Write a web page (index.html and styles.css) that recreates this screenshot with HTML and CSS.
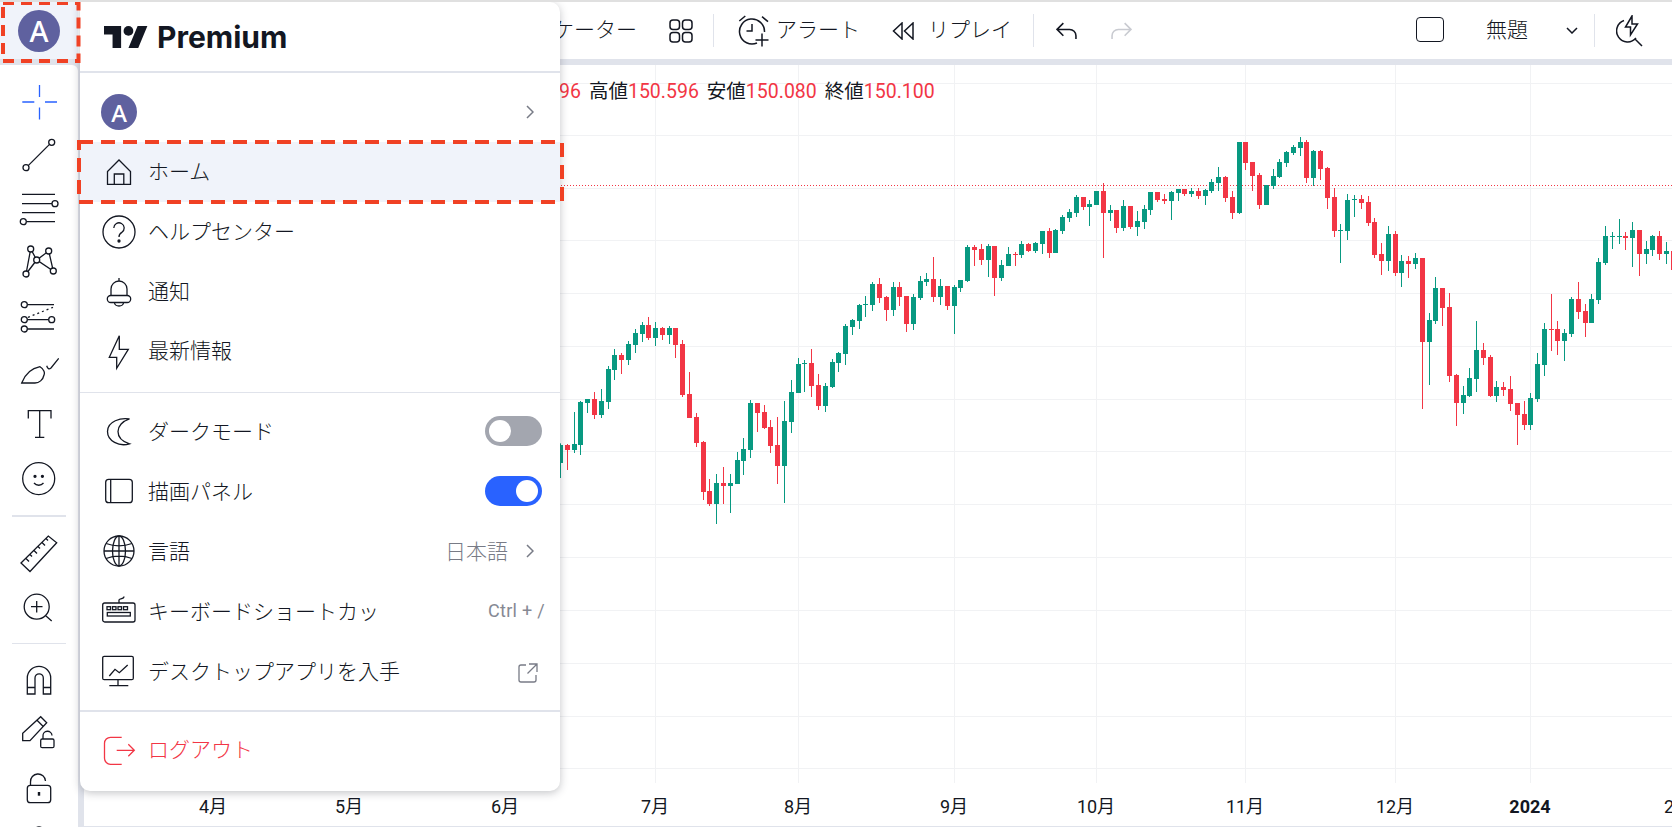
FILE: index.html
```html
<!DOCTYPE html>
<html lang="ja">
<head>
    <meta charset="UTF-8">
    <meta name="viewport" content="width=device-width, initial-scale=1.0">
    <title>チャート</title>
    <link rel="stylesheet" href="styles.css">
</head>
<body>

    <!-- top toolbar -->
    <header class="topbar">
        <div class="account-cell">
            <div class="avatar avatar-big">A</div>
        </div>
        <div class="tb-tools">
            <span class="tb-text">インジケーター</span>
            <svg class="tb-ico tb-gap" width="24" height="24" viewBox="0 0 24 24"><rect x="1" y="1" width="9.5" height="9.5" rx="3"/><rect x="13.5" y="1" width="9.5" height="9.5" rx="3"/><rect x="1" y="13.5" width="9.5" height="9.5" rx="3"/><rect x="13.5" y="13.5" width="9.5" height="9.5" rx="3"/></svg>
            <span class="tb-divider tb-divider-a"></span>
            <svg class="tb-ico tb-alert" width="36" height="36" viewBox="0 0 36 36"><path d="M3.300 8l6-5M26 3.700l6 5M28.500 19A12.500 12.500 0 1 0 21 30M16 11v7h-5.500M26 20.500v13M19.500 27h13"/></svg>
            <span class="tb-text tb-label">アラート</span>
            <svg class="tb-ico tb-gap" width="22" height="18" viewBox="0 0 22 18"><path d="M10 1L1.500 9l8.500 8zM21 1l-8.500 8 8.500 8z"/></svg>
            <span class="tb-text tb-label-wide">リプレイ</span>
            <span class="tb-divider tb-divider-b"></span>
            <svg class="tb-ico tb-undo" width="21" height="18" viewBox="0 0 20 17"><path d="M7 1L1 7l6 6M1 7h12a6 6 0 0 1 6 6v3"/></svg>
            <svg class="tb-ico tb-ico-off tb-redo" width="21" height="18" viewBox="0 0 20 17"><path d="M13 1l6 6-6 6M19 7H7a6 6 0 0 0-6 6v3"/></svg>
            <span class="tb-square"></span>
            <span class="tb-text tb-layout">無題</span>
            <svg class="tb-ico tb-chevron" width="12" height="7" viewBox="0 0 12 7"><path d="M1 1l5 5 5-5"/></svg>
            <span class="tb-divider tb-divider-right"></span>
            <svg class="tb-ico tb-bolt" width="28" height="32" viewBox="0 0 28 32"><path d="M8 5.500A11 11 0 1 0 20 23M16 1L9.500 12h5v8l7-11H16zM18.500 23.500L26 31"/></svg>
            <span class="tb-stub"></span>
        </div>
    </header>

    <div class="workspace">
        <!-- drawing tools -->
        <nav class="side">
            <div class="tool"><svg class="ico ico-blue" width="40" height="40" viewBox="0 0 40 40"><path d="M3.300 20h12M26 20h12M20.500 3v12M20.500 25.500v12"/></svg></div>
            <div class="tool"><svg class="ico" width="40" height="40" viewBox="0 0 40 40"><circle cx="7" cy="32.700" r="3"/><circle cx="32.700" cy="7.300" r="3"/><path d="M9.200 30.600L30.500 9.400"/></svg></div>
            <div class="tool"><svg class="ico" width="40" height="40" viewBox="0 0 40 40"><path d="M3 5.300h33M3 14.700h30M3 23.700h33M7.500 32.700H36"/><circle cx="36" cy="14.700" r="3"/><circle cx="4.300" cy="32.700" r="3"/></svg></div>
            <div class="tool"><svg class="ico" width="40" height="40" viewBox="0 0 40 40"><path d="M7 31L11.700 6l6 11L29.700 8l4.600 20-16.600-11L7 31"/><circle cx="7" cy="31" r="3"/><circle cx="11.700" cy="6" r="3"/><circle cx="17.700" cy="17" r="3"/><circle cx="29.700" cy="8" r="3"/><circle cx="34.300" cy="28" r="3"/></svg></div>
            <div class="tool"><svg class="ico" width="40" height="40" viewBox="0 0 40 40"><path d="M8.300 7.700H35M8.300 22.700h21.400M8.300 32H35"/><path class="dashed" d="M9 20.300l25-10"/><circle cx="5.300" cy="7.700" r="3"/><circle cx="5.300" cy="22.700" r="3"/><circle cx="32.700" cy="22.700" r="3"/><circle cx="5.300" cy="32" r="3"/></svg></div>
            <div class="tool"><svg class="ico" width="40" height="40" viewBox="0 0 40 40"><path d="M2.700 32C5 26 9 18 21 15.700c4 2.300 5 6.300 4 8.300-1 5-5 8-9 8zM27.700 14.700c1 3.300 2.300 3.800 4.300 2.300l7.700-9.700"/></svg></div>
            <div class="tool"><svg class="ico" width="40" height="40" viewBox="0 0 40 40"><path d="M9.300 14.500V6.700H32v7.800M20.700 6.700v26.600M16 33.300h9.300"/></svg></div>
            <div class="tool"><svg class="ico" width="40" height="40" viewBox="0 0 40 40"><circle cx="19.700" cy="20.600" r="16"/><circle class="dot" cx="16" cy="18.300" r="1"/><circle class="dot" cx="23.400" cy="18.300" r="1"/><path d="M15 25c2.500 3 7 3 9.500 0"/></svg></div>
            <div class="side-divider side-divider-a"></div>
            <div class="tool"><svg class="ico" width="40" height="40" viewBox="0 0 40 40"><path d="M2 29L29.300 2l8.400 6.700L11 37.500zM7 24.500l3 3M11 20.500l2 2M15 16.500l3 3M19 12.500l2 2M23 8.500l3 3M27 4.500l2 2"/></svg></div>
            <div class="tool"><svg class="ico" width="40" height="40" viewBox="0 0 40 40"><circle cx="17.700" cy="18.700" r="12.500"/><path d="M26.700 27.700l6 5.300M12 18.700h11.500M17.700 13v11.500"/></svg></div>
            <div class="side-divider side-divider-b"></div>
            <div class="tool"><svg class="ico" width="40" height="40" viewBox="0 0 40 40"><path d="M8.300 34V18a11.700 11.700 0 0 1 23.400 0v16h-7.400V18a4.150 4.150 0 0 0-8.300 0v16zM8.300 27.500H16M24.300 27.500h7.400"/></svg></div>
            <div class="tool"><svg class="ico" width="40" height="40" viewBox="0 0 40 40"><path d="M3.700 27.700v-7.400L21.700 3.700l6 6L11 27.700zM18 7.200l6 6M24 26v-3a4.500 4.500 0 0 1 9-.5"/><rect x="21.700" y="26" width="13.300" height="8.700" rx="1.500"/></svg></div>
            <div class="tool"><svg class="ico" width="40" height="40" viewBox="0 0 40 40"><rect x="8.300" y="18.300" width="23.400" height="17.400" rx="3"/><path d="M11.500 18.300V15a7.500 7.500 0 0 1 15-1"/><path class="key" d="M20 25v3.700"/></svg></div>
            <div class="tool"><svg class="ico" width="40" height="40" viewBox="0 0 40 40"><circle cx="20" cy="12" r="6"/></svg></div>
        </nav>

        <main class="chart">
            <svg id="chart-svg" class="chart-svg" width="1588" height="762" viewBox="84 65 1588 762"></svg>
            <div class="legend">
                <span>始値<b>150.596</b></span>
                <span>高値<b>150.596</b></span>
                <span>安値<b>150.080</b></span>
                <span>終値<b>150.100</b></span>
            </div>
        </main>
    </div>

    <!-- account menu -->
    <aside class="menu">
        <div class="menu-logo">
            <svg width="44" height="22" viewBox="0 4 36 18"><path d="M14 22H7V11H0V4h14v18zM28 22h-8l7.500-18h8L28 22z"/><circle cx="20" cy="8" r="4"/></svg>
            <span>Premium</span>
        </div>
        <div class="menu-group">
            <div class="row row-user">
                <div class="avatar avatar-small">A</div>
                <svg class="chev" width="8" height="14" viewBox="0 0 8 14"><path d="M1 1l6 6-6 6"/></svg>
            </div>
            <div class="row row-active">
                <svg class="ico" width="40" height="40" viewBox="0 0 40 40"><path d="M8.500 32.300V19.500L20 8l11.500 11.500v12.800zM15.300 32.300V22h9.500v10.300"/></svg>
                <span>ホーム</span>
            </div>
            <div class="row">
                <svg class="ico" width="40" height="40" viewBox="0 0 40 40"><circle cx="20" cy="20" r="16"/><path d="M14.800 16a5.200 5.200 0 1 1 8 4.400c-2 1.200-2.800 2.400-2.800 4.600"/><circle class="dot" cx="20" cy="29" r="1"/></svg>
                <span>ヘルプセンター</span>
            </div>
            <div class="row">
                <svg class="ico" width="40" height="40" viewBox="0 0 40 40"><path d="M12 24.500V18a8 8 0 0 1 16 0v6.500M20 10V7M15.500 31.500a4.500 3.500 0 0 0 9 0"/><rect x="8.300" y="24.500" width="23.400" height="7" rx="3.500"/></svg>
                <span>通知</span>
            </div>
            <div class="row">
                <svg class="ico" width="40" height="40" viewBox="0 0 40 40"><path d="M20.300 4.700l-10 21.600h7.400v11l11.600-19h-9z"/></svg>
                <span>最新情報</span>
            </div>
        </div>
        <div class="menu-group menu-group-line">
            <div class="row">
                <svg class="ico" width="40" height="40" viewBox="0 0 40 40"><path d="M30.500 8C22 6.500 8.500 10 8.500 20.500 8.500 30 20 36 30.500 32.800 23 30.500 19 26 19 20.500 19 15 23.500 10 30.500 8z"/></svg>
                <span>ダークモード</span>
                <div class="toggle"></div>
            </div>
            <div class="row">
                <svg class="ico" width="40" height="40" viewBox="0 0 40 40"><rect x="6.700" y="8.300" width="26.600" height="23.400" rx="3"/><path d="M11.700 8.300v23.400"/></svg>
                <span>描画パネル</span>
                <div class="toggle toggle-on"></div>
            </div>
            <div class="row">
                <svg class="ico" width="40" height="40" viewBox="0 0 40 40"><circle cx="20" cy="20" r="15"/><ellipse cx="20" cy="20" rx="6.500" ry="15"/><path d="M20 5v30M7 12.500c8 3 18 3 26 0M7 27.500c8-3 18-3 26 0M5 20h30"/></svg>
                <span>言語</span>
                <span class="row-value">日本語</span>
                <svg class="chev" width="8" height="14" viewBox="0 0 8 14"><path d="M1 1l6 6-6 6"/></svg>
            </div>
            <div class="row">
                <svg class="ico" width="40" height="40" viewBox="0 0 40 40"><rect x="3.700" y="12" width="32.300" height="19" rx="2"/><path d="M20 12V9c0-1.500 5-.5 5-3.500"/><rect x="8" y="15.700" width="3.500" height="3"/><rect x="13.500" y="15.700" width="3.500" height="3"/><rect x="19" y="15.700" width="3.500" height="3"/><rect x="24.500" y="15.700" width="4" height="3"/><rect x="8.300" y="21.500" width="23" height="3.500"/></svg>
                <span>キーボードショートカッ</span>
                <span class="row-key">Ctrl + /</span>
            </div>
            <div class="row">
                <svg class="ico" width="40" height="40" viewBox="0 0 40 40"><rect x="3.700" y="5.300" width="30.600" height="23.400" rx="1.500"/><path d="M19 28.700v6M10.300 34.700h19M10.300 25l5.700-6.700 4.300 3.400 8.400-7.700"/></svg>
                <span>デスクトップアプリを入手</span>
                <svg class="ico ico-grey row-end" width="20" height="20" viewBox="0 0 20 20"><path d="M8 2H3a2 2 0 0 0-2 2v13a2 2 0 0 0 2 2h13a2 2 0 0 0 2-2v-5M11 1h8v8M19 1L9.500 10.500"/></svg>
            </div>
        </div>
        <div class="menu-group-last">
            <div class="row row-logout">
                <svg class="ico ico-red" width="40" height="40" viewBox="0 0 40 40"><path d="M22.700 7.300H11.500a6 6 0 0 0-6 6v15a6 6 0 0 0 6 6h11.200M17.700 20.300h17.600M29.300 14.300l6 6-6 6"/></svg>
                <span>ログアウト</span>
            </div>
        </div>
    </aside>

    <!-- red guide boxes -->
    <svg class="guide guide-account" width="82" height="64" viewBox="0 0 82 64"><rect x="3" y="3" width="75.500" height="58"/></svg>
    <svg class="guide guide-home" width="487" height="66" viewBox="0 0 487 66"><rect x="2" y="2" width="483" height="60"/></svg>

    <script src="chart.js"></script>
</body>
</html>
```

FILE: styles.css
```css
body {
    margin: 0;
    height: 827px;
    overflow: hidden;
    position: relative;
    background-color: #e0e3eb;
    border-top: 2px solid #e0e0e0;
    box-sizing: border-box;
    color: #131722;
    font-family: Roboto, "Noto Sans CJK JP", sans-serif;
}
/* top toolbar */
.topbar {
    display: flex;
    height: 57px;
    background-color: white;
}
.account-cell {
    width: 78px;
    display: flex;
    align-items: center;
    justify-content: center;
    background-color: #f0f3fa;
}
.avatar {
    display: flex;
    align-items: center;
    justify-content: center;
    border-radius: 50%;
    background-color: #5f619f;
    color: white;
    font-family: "Noto Sans", sans-serif;
    font-weight: 500;
}
.avatar-big {
    width: 42px;
    height: 42px;
    font-size: 29px;
}
.avatar-small {
    width: 36px;
    height: 36px;
    font-size: 24px;
}
.tb-tools {
    flex: 1;
    display: flex;
    align-items: center;
    padding-left: 412px;
    min-width: 0;
    overflow: hidden;
}
.tb-text {
    padding-bottom: 5px;
    font-size: 21px;
    font-weight: 300;
    white-space: nowrap;
}
.tb-ico {
    flex-shrink: 0;
    fill: none;
    stroke: #131722;
    stroke-width: 1.5;
}
.tb-ico-off {
    stroke: #c9cbd1;
}
.tb-gap {
    margin-left: 32px;
}
.tb-divider {
    width: 1px;
    height: 33px;
    flex-shrink: 0;
    background-color: #e0e3eb;
}
.tb-divider-a {
    margin-left: 20px;
}
.tb-divider-b {
    margin-left: 21px;
}
.tb-alert {
    margin-left: 22px;
}
.tb-label {
    margin-left: 4px;
}
.tb-label-wide {
    margin-left: 14px;
}
.tb-undo {
    margin-left: 22px;
}
.tb-redo {
    margin-left: 34px;
}
.tb-square {
    width: 26px;
    height: 23px;
    margin-left: auto;
    margin-bottom: 2px;
    flex-shrink: 0;
    border: 1.5px solid #131722;
    border-radius: 4px;
}
.tb-layout {
    margin-left: 42px;
}
.tb-chevron {
    margin-left: 38px;
}
.tb-divider-right {
    margin-left: 16px;
}
.tb-bolt {
    margin-left: 21px;
}
.tb-stub {
    width: 5px;
    height: 6px;
    margin-left: 29px;
    margin-right: -6px;
    flex-shrink: 0;
    background-color: #131722;
}
/* workspace under the toolbar */
.workspace {
    display: flex;
    gap: 6px;
    margin-top: 6px;
    height: 762px;
}
.side {
    width: 78px;
    flex-shrink: 0;
    padding-top: 9.8px;
    box-sizing: border-box;
    background-color: white;
    border-top-right-radius: 6px;
    display: flex;
    flex-direction: column;
    align-items: center;
}
.tool {
    height: 53.8px;
    flex-shrink: 0;
    display: flex;
    align-items: center;
    justify-content: center;
}
.side-divider {
    width: 54px;
    flex-shrink: 0;
    background-color: #e0e3eb;
}
.side-divider-a {
    height: 2px;
    margin: 10px 0 10px;
}
.side-divider-b {
    height: 1px;
    margin: 8px 0 9px;
}
/* line icons */
.ico {
    flex-shrink: 0;
    fill: none;
    stroke: #131722;
    stroke-width: 1.3;
}
.ico circle {
    fill: white;
}
.ico .dot {
    fill: #131722;
}
.ico .dashed {
    stroke-dasharray: 2 3;
}
.ico .key {
    stroke-width: 2.4;
}
.ico-blue {
    stroke: #2962ff;
}
.ico-red {
    stroke: #f23645;
}
.ico-grey {
    stroke: #787b86;
}
/* chart */
.chart {
    flex: 1;
    min-width: 0;
    position: relative;
    overflow: hidden;
    background-color: white;
}
.chart-svg {
    display: block;
}
.grid-line {
    stroke: #f1f2f4;
    stroke-width: 1;
}
.price-line {
    stroke: #f23645;
    stroke-width: 1;
    stroke-dasharray: 1 2;
}
.axis-line {
    stroke: #e0e3eb;
    stroke-width: 1;
}
.axis-label {
    font-size: 18px;
    fill: #131722;
    text-anchor: middle;
}
.axis-label-year {
    font-weight: 700;
}
.up {
    fill: #089981;
}
.down {
    fill: #f23645;
}
.legend {
    position: absolute;
    top: 10px;
    left: 387px;
    display: flex;
    gap: 8px;
    font-size: 19.5px;
    white-space: nowrap;
}
.legend b {
    font-weight: 400;
    color: #f23645;
}
/* account menu */
.menu {
    position: absolute;
    top: 0;
    left: 80px;
    width: 480px;
    height: 789px;
    display: flex;
    flex-direction: column;
    background-color: white;
    border-radius: 0 10px 10px 10px;
    box-shadow: 0 2px 8px rgba(42, 46, 57, 0.28);
}
.menu-logo {
    height: 71px;
    flex-shrink: 0;
    box-sizing: border-box;
    display: flex;
    align-items: center;
    gap: 9px;
    padding-left: 24px;
    border-bottom: 2px solid #e0e3eb;
    font-family: Inter, sans-serif;
    font-size: 30px;
    font-weight: 700;
}
.menu-logo svg {
    fill: #131722;
}
.menu-group {
    padding: 9px 0 11px;
}
.menu-group-line {
    border-top: 1px solid #e0e3eb;
    padding: 8px 0 9px;
}
.menu-group-last {
    border-top: 2px solid #e0e3eb;
    padding-top: 8px;
}
.row {
    height: 59.7px;
    box-sizing: border-box;
    display: flex;
    align-items: center;
    gap: 9px;
    padding: 0 18px 0 19px;
    font-size: 21px;
    font-weight: 300;
    white-space: nowrap;
}
.row > span {
    padding-bottom: 3px;
}
.menu-group-line .row {
    height: 60px;
}
.menu-group-line .row > span {
    padding-bottom: 1px;
}
.row-user {
    height: 60px;
    padding-left: 21px;
}
.row-active {
    background-color: #f0f3fa;
}
.row-logout {
    color: #f23645;
}
.row-value {
    margin-left: auto;
    color: #787b86;
}
.row-key {
    margin-left: auto;
    margin-right: -3px;
    font-size: 18px;
    font-weight: 400;
    letter-spacing: 0.3px;
    color: #868993;
}
.row-end {
    margin-left: auto;
    margin-right: 4px;
    margin-top: 4px;
}
.chev {
    flex-shrink: 0;
    fill: none;
    stroke: #787b86;
    stroke-width: 1.5;
    margin-right: 8px;
}
.row-user .chev {
    margin-left: auto;
}
.row-value + .chev {
    margin-left: 9px;
}
.toggle {
    width: 57px;
    height: 30px;
    margin-left: auto;
    padding: 4px;
    box-sizing: border-box;
    display: flex;
    border-radius: 15px;
    background-color: #a3a6af;
}
.toggle::after {
    content: "";
    width: 22px;
    height: 22px;
    border-radius: 50%;
    background-color: white;
}
.toggle-on {
    justify-content: flex-end;
    background-color: #2962ff;
}
/* red guide boxes */
.guide {
    position: absolute;
    fill: none;
    stroke: #f04124;
    stroke-width: 4;
}
.guide-account {
    top: -2px;
    left: 0;
    stroke-dasharray: 11 7;
}
.guide-home {
    top: 138px;
    left: 77px;
    stroke-dasharray: 14 8;
}
```

FILE: chart.js
```js
const svg = document.getElementById('chart-svg');
const NS = 'http://www.w3.org/2000/svg';

// grid positions
const hLines = [83, 135, 188, 240, 293, 346, 399, 451, 504, 557, 610, 663, 716, 768];
const months = [
    [213, '4月'], [349, '5月'], [505, '6月'], [655, '7月'], [798, '8月'], [954, '9月'],
    [1096, '10月'], [1245, '11月'], [1395, '12月'], [1530, '2024', true], [1678, '2月'],
];

// candles read off the chart: [g|r, body top, body bottom, wick top, wick bottom]
// values are at 3x, each block measured from its own y origin
const blocks = [
    { y0: 230, rows: [
        ['g',645,699,640,744], ['r',645,660,642,720], ['g',642,660,546,669], ['g',516,645,513,675],
        ['g',507,519,507,549], ['r',507,555,486,567], ['g',513,555,477,564], ['g',417,516,408,537],
        ['g',375,420,357,450], ['r',375,390,369,432], ['g',342,390,333,405], ['g',309,345,297,369],
        ['g',285,312,276,336], ['r',285,324,261,330], ['g',294,324,276,348], ['r',294,315,291,330],
        ['g',294,315,288,342], ['r',294,345,294,384], ['r',342,495,330,501], ['r',492,564,426,564],
        ['r',561,639,549,651], ['r',636,786,633,810], ['r',783,822,747,828], ['g',759,822,732,882],
        ['r',759,768,711,822], ['g',759,768,732,849], ['g',690,762,666,762], ['g',657,693,624,735],
        ['g',519,660,510,684], ['r',519,549,519,606], ['r',546,594,525,597], ['r',591,648,570,669],
        ['r',645,708,561,762], ['g',573,708,513,819], ['g',486,576,450,609], ['g',402,489,384,489],
        ['g',399,402,390,486], ['r',399,468,357,501], ['r',465,528,432,540], ['g',468,528,459,546],
        ['g',396,471,387,474], ['g',369,399,366,426], ['g',288,372,282,405], ['g',270,291,267,315],
        ['g',225,273,222,297], ['g',222,225,198,261], ['g',162,225,156,243], ['r',162,204,144,219],
        ['r',201,240,198,273], ['g',171,240,156,258], ['r',171,201,156,228], ['r',198,282,198,306],
        ['g',201,282,192,300], ['g',153,204,138,210], ['g',147,156,129,168], ['r',147,201,81,216],
        ['g',168,201,147,225], ['r',168,228,168,240], ['g',171,228,165,312], ['g',150,174,150,186],
        ['g',51,153,45,156], ['r',51,60,45,108], ['r',57,90,42,105], ['g',48,90,42,141],
        ['r',48,144,48,198],
    ] },
    { y0: 120, rows: [
        ['g',435,474,420,483], ['g',402,438,381,438], ['r',402,405,396,438], ['g',372,405,363,414],
        ['r',372,393,369,396], ['g',369,393,366,399], ['g',333,372,333,402], ['r',333,399,324,414],
        ['g',330,399,327,399], ['g',291,333,285,342], ['g',276,294,267,306], ['g',231,279,225,291],
        ['r',231,261,231,270], ['g',252,261,240,318], ['g',213,255,213,255], ['r',213,279,189,414],
        ['g',270,279,255,303], ['r',270,324,270,339], ['g',258,324,240,333], ['r',258,321,258,327],
        ['g',303,321,273,348], ['g',267,306,255,327], ['g',216,270,216,285], ['r',216,240,216,246],
        ['r',237,243,222,252], ['g',216,243,213,300], ['g',207,219,207,243], ['r',207,222,207,228],
        ['g',213,222,204,231], ['r',213,228,204,237], ['g',210,228,207,255], ['g',186,213,177,219],
        ['g',171,189,141,213], ['r',171,234,168,246], ['r',231,279,213,297], ['g',66,279,66,282],
        ['r',66,129,66,150], ['r',126,168,126,213], ['r',165,255,159,267], ['g',195,255,195,255],
        ['g',168,198,147,207], ['g',126,171,117,174], ['g',96,129,93,141], ['g',81,99,75,105],
        ['g',66,84,51,108], ['r',66,174,60,189], ['g',93,174,90,198], ['r',93,147,90,180],
        ['r',144,234,141,267],
    ] },
    { y0: 180, rows: [
        ['r',51,153,24,171], ['g',150,153,132,249], ['g',60,153,42,180], ['g',57,60,45,111],
        ['r',57,69,45,87], ['r',66,129,48,138], ['r',126,225,114,234], ['r',222,243,189,285],
        ['g',162,243,138,273], ['r',162,279,153,288], ['g',243,279,225,321], ['r',243,252,228,294],
        ['g',234,252,219,267], ['r',234,486,234,687], ['g',420,486,399,615], ['g',324,423,291,432],
        ['r',324,384,324,438], ['r',381,588,339,606], ['r',585,669,582,738], ['g',645,669,618,702],
        ['g',594,648,564,651], ['g',510,597,423,636], ['r',510,534,489,555], ['r',531,648,525,651],
        ['g',621,648,603,666], ['r',621,630,606,648], ['r',627,672,588,693], ['r',669,705,669,795],
        ['r',702,735,663,750], ['g',654,735,639,750], ['g',552,657,519,666], ['g',447,555,429,588],
        ['r',447,450,342,513], ['r',447,483,423,525], ['g',459,483,447,543], ['g',357,462,351,471],
        ['r',357,396,306,417], ['r',393,429,372,471], ['g',357,429,342,429], ['g',246,360,234,372],
        ['g',168,249,138,255], ['g',168,171,156,207], ['g',168,171,117,192], ['r',168,174,156,210],
        ['g',150,174,126,261], ['r',150,222,150,288], ['g',207,222,183,252], ['g',168,210,165,228],
        ['r',168,222,153,240], ['g',213,222,186,252], ['r',213,270,213,267],
    ] },
];

function add(tag, attrs) {
    const el = document.createElementNS(NS, tag);
    Object.keys(attrs).forEach(key => el.setAttribute(key, attrs[key]));
    svg.appendChild(el);
    return el;
}

hLines.forEach(y => {
    add('line', { class: 'grid-line', x1: 84, x2: 1672, y1: y + 0.5, y2: y + 0.5 });
});
months.forEach(([x, label, isYear]) => {
    if (x < 1672) {
        add('line', { class: 'grid-line', x1: x + 0.5, x2: x + 0.5, y1: 65, y2: 783 });
    }
    const text = add('text', { class: isYear ? 'axis-label axis-label-year' : 'axis-label', x: x, y: 813 });
    text.textContent = label;
});
add('line', { class: 'axis-line', x1: 84, x2: 1672, y1: 826.5, y2: 826.5 });
add('line', { class: 'price-line', x1: 84, x2: 1672, y1: 185.5, y2: 185.5 });

let index = 0;
blocks.forEach(block => {
    block.rows.forEach(([dir, top, bottom, wickTop, wickBottom]) => {
        const cx = 560.6 + index * 6.785;
        const cls = dir === 'g' ? 'up' : 'down';
        const y = v => block.y0 + v / 3;
        add('rect', { class: cls, x: Math.floor(cx), y: y(wickTop), width: 1, height: (wickBottom - wickTop) / 3 });
        add('rect', { class: cls, x: Math.floor(cx) - 2, y: y(top), width: 5, height: (bottom - top) / 3 });
        index++;
    });
});
```
